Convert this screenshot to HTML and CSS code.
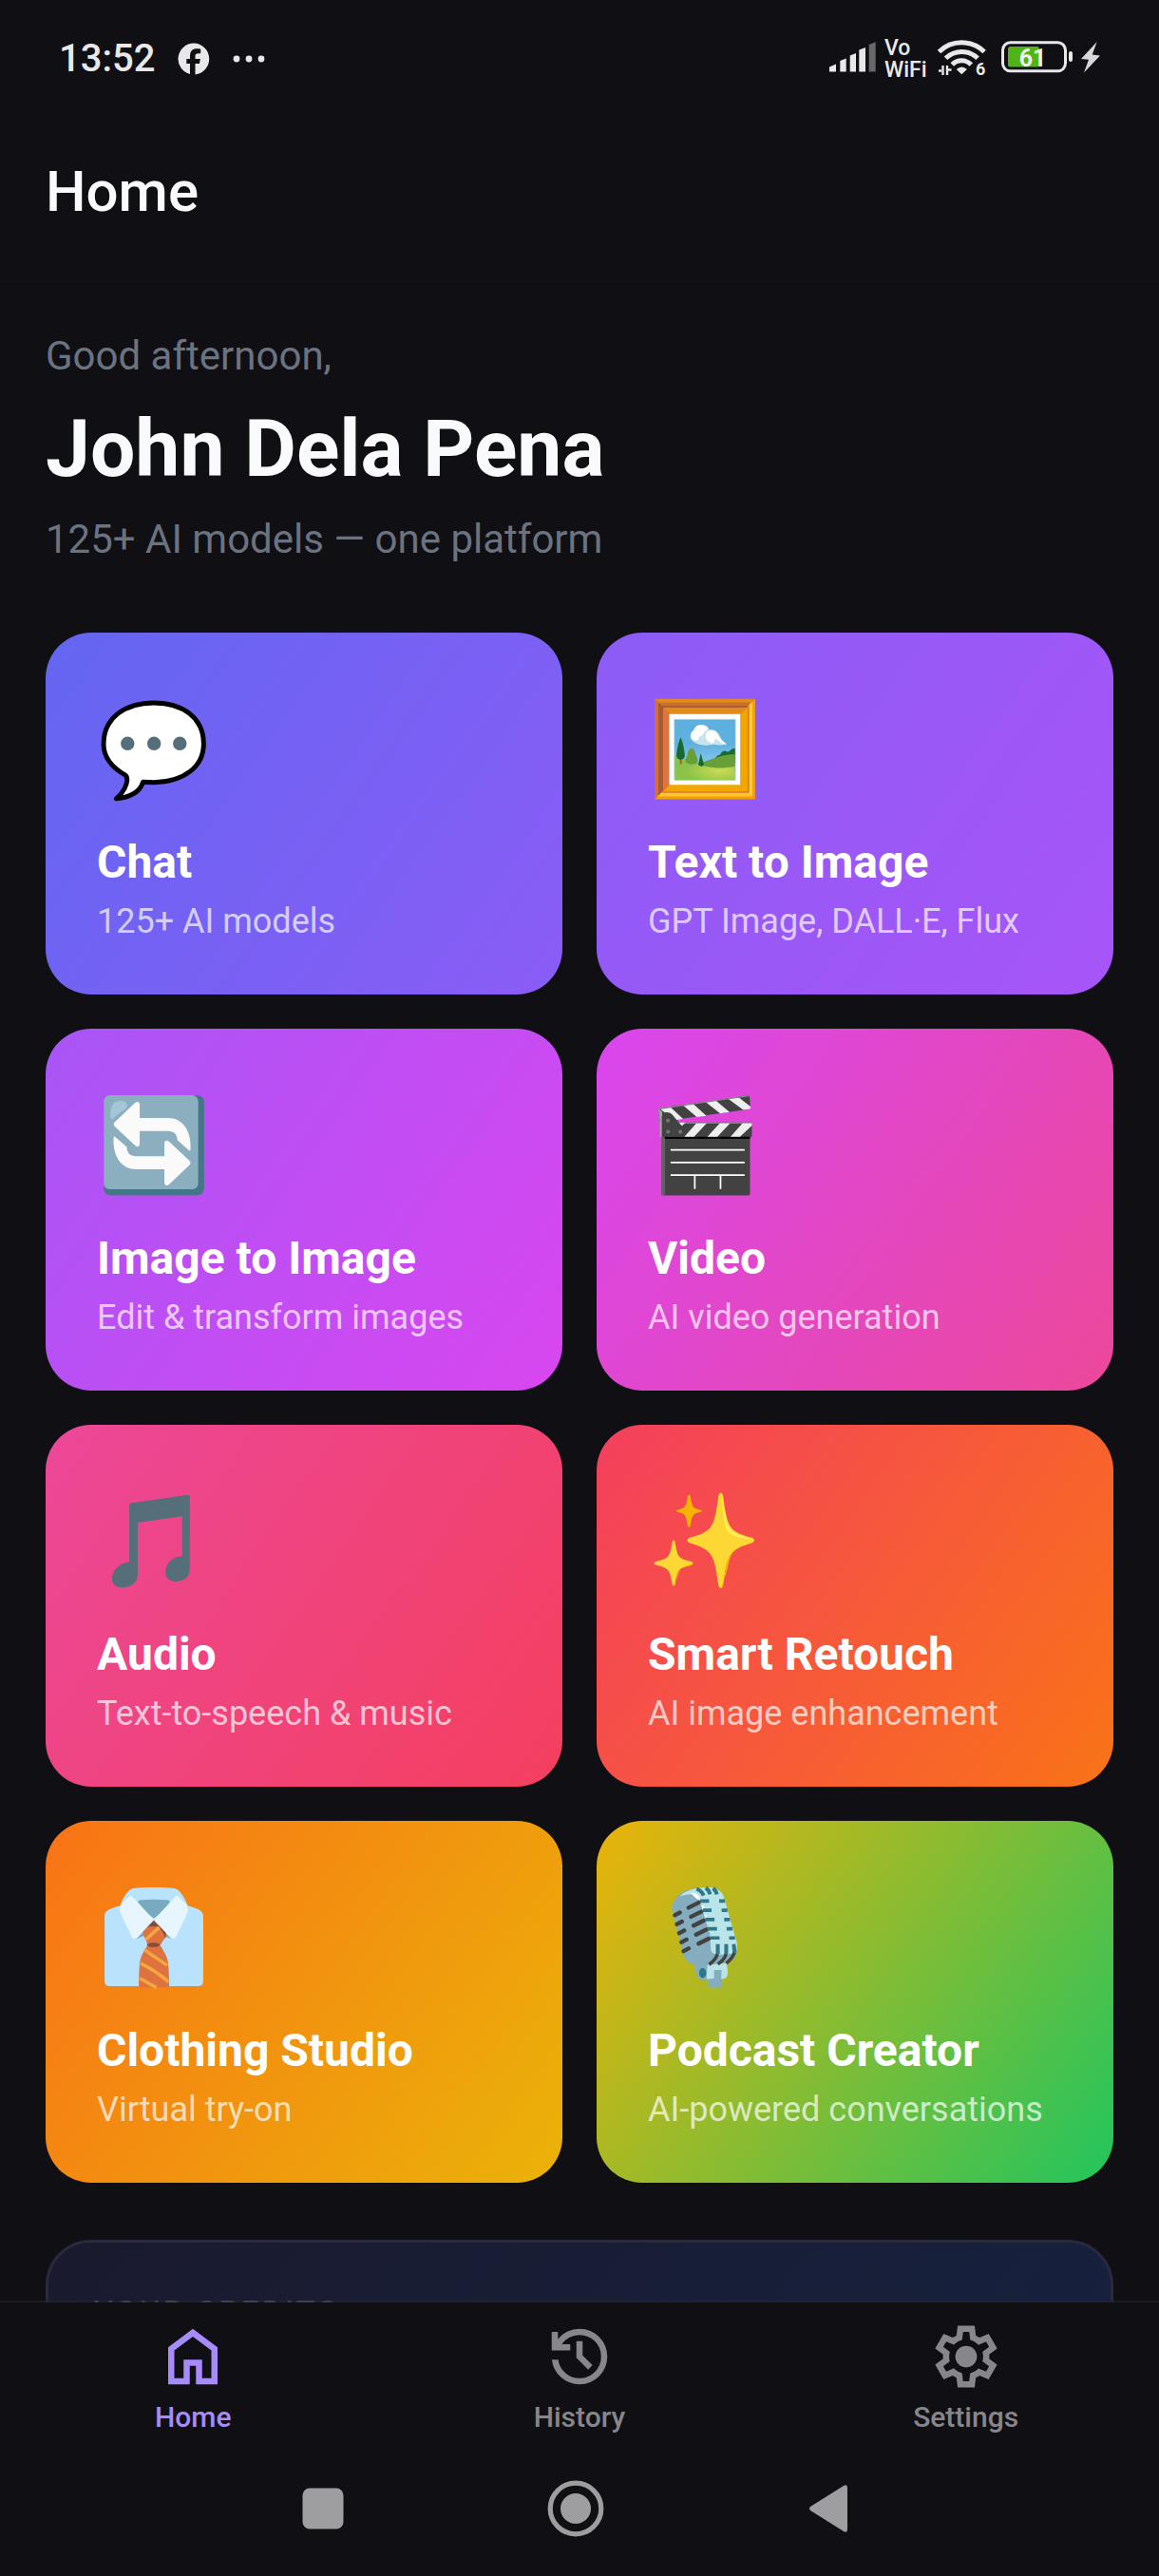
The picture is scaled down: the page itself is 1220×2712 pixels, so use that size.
FILE: index.html
```html
<!DOCTYPE html>
<html lang="en">
<head>
<meta charset="utf-8">
<meta name="viewport" content="width=device-width, initial-scale=1">
<title>Home</title>
<link rel="stylesheet" href="styles.css">
</head>
<body>
<div class="status">
  <div class="status-group status-left">
    <span class="clock">13:52</span>
    <svg width="34" height="34" viewBox="0 0 34 34" aria-hidden="true"><path fill="#e8e8e8" d="M17 .5a16.500 16.500 0 0 0-4 32.500V22H9.300v-5H13v-2.800C13 8.700 15.700 6.300 20 6.300c1.700 0 3.300.2 4.200.4v4.600h-2.400c-2.500 0-3.300 1-3.300 3.200V17h5.400l-1 5h-4.400v11.400A16.500 16.500 0 0 0 17 .5z"/></svg>
    <svg width="34" height="8" viewBox="0 0 34 8" aria-hidden="true" fill="#e8e8e8"><circle cx="4" cy="4" r="3.400"/><circle cx="17" cy="4" r="3.400"/><circle cx="30" cy="4" r="3.400"/></svg>
  </div>
  <div class="status-group status-right">
    <svg width="50" height="42" viewBox="0 0 50 42" aria-hidden="true" fill="#e8e8e8"><path d="M0 34.500V29.500l7-3v8zM11.300 34.500V23l6.400-2.500v14zM21.700 34.500V17.500l6.300-2.500v19.500zM31.300 34.500V11.500L38 9v25.500z"/><path fill="#68686b" d="M41.700 34.500V6l7-2.700v31.200z"/></svg>
    <span class="vowifi"><span>Vo</span><span>WiFi</span></span>
    <svg width="60" height="42" viewBox="0 0 60 42" aria-hidden="true" fill="none" stroke="#e8e8e8" stroke-width="5"><path d="M2.500 13.500a34 34 0 0 1 47.600 0M9.500 20.300a24 24 0 0 1 33.600 0M16.300 27a14 14 0 0 1 20 0"/><path fill="#e8e8e8" stroke="none" d="M20.700 32q5.600-5 11.200 0l-5.600 5.200z"/><path stroke-width="2.400" d="M2 33.500h3M6.500 28v10M11 38V28M11.500 32.500h4"/><text x="41" y="38" class="wifi-gen">6</text></svg>
    <svg width="76" height="42" viewBox="0 0 76 42" role="img" aria-label="Battery 61%"><rect x="1.500" y="3.800" width="66" height="30" rx="8" fill="none" stroke="#e8e8e8" stroke-width="3"/><rect x="7" y="8" width="33" height="21.500" rx="2.500" fill="#4fb516"/><rect x="71" y="13" width="4" height="11" rx="2" fill="#e8e8e8"/><text x="33" y="29" text-anchor="middle" class="battery-level">61</text></svg>
    <svg width="20" height="42" viewBox="0 0 20 42" aria-hidden="true"><path fill="#d8d8d8" d="M16.700 3 0 21l8 .7L3 35.500l17-18-8.300-1z"/></svg>
  </div>
</div>

<header class="appbar"><h1>Home</h1></header>

<main class="content">
  <section class="greeting">
    <p class="muted">Good afternoon,</p>
    <h2>John Dela Pena</h2>
    <p class="muted">125+ AI models — one platform</p>
  </section>

  <section class="grid">
    <a class="card chat" href="#chat">
      <svg class="pic" viewBox="-4 -14 136 150" aria-hidden="true"><path fill="#fff" stroke="#000" stroke-width="5.600" stroke-linejoin="round" d="M64 8.700C29 8.700 3.800 27 3.800 58c0 17 11.700 29 25.700 37 4 2.500 2.500 10-.5 16-2.500 5-6 9-10 12.300 15-1.500 28-7 32-20 4 .3 8 .5 13 .5 36-.5 59.500-19 59.500-46C123.500 27 99 8.700 64 8.700z"/><g fill="#546e7a"><circle cx="32.500" cy="57.400" r="8.200"/><circle cx="64.200" cy="57.400" r="8.200"/><circle cx="95" cy="57.400" r="8.200"/></g></svg>
      <h3>Chat</h3><p>125+ AI models</p>
    </a>
    <a class="card text-image" href="#text-to-image">
      <svg class="pic" viewBox="-4 -14 136 150" aria-hidden="true">
        <defs><linearGradient id="sky" x1="0" y1="0" x2="0" y2="1"><stop offset=".4" stop-color="#5eb0de"/><stop offset="1" stop-color="#a8dcfb"/></linearGradient><radialGradient id="field" cx=".75" cy=".6" r=".55"><stop offset="0" stop-color="#cddc55"/><stop offset="1" stop-color="#8bc34a"/></radialGradient></defs>
        <path fill="#df8a1b" d="M4 4h120L64 64z"/><path fill="#d1703a" d="M4 4v120l60-60z"/><path fill="#f2a600" d="M124 4v120L64 64z"/><path fill="#f2a000" d="M4 124h120L64 64z"/>
        <path fill="#c96f2a" d="M8.500 8.500h111L64 64z"/><path fill="#a35c38" d="M8.300 8.300v111.400L64 64z"/><path fill="#ffcf40" d="M120.500 7.500v113L64 64z"/><path fill="#ffc533" d="M7.500 120.600h113L64 64z"/>
        <path fill="#a8603a" d="M12 12h104L64 64z"/><path fill="#dd7a2a" d="M117 11v105.500L64 64zM12 116.300h105L64 64z"/>
        <path fill="#e38a1a" d="M14 14.300h101L64 64z"/><path fill="#e0733f" d="M14 14.300v100.400L64 64z"/><path fill="#f2a600" d="M115 14.300v100.400H14L64 64z"/>
        <path fill="#fff" d="M21.400 22h84.800v84.800H21.400z"/><path fill="url(#sky)" stroke="#9cc6df" stroke-width=".8" d="M27.500 28.500h73v72.500h-73z"/>
        <path fill="#1b6b2c" d="M72 80c4-2 5-9 10-9 3-6 7-5 8-4 4 1 5-4 10-4v17z"/><path fill="#689f38" d="M50 81c18 0 25-10 50-11v22H50z"/><path fill="url(#field)" d="M28 73c20 3 30 13 50 13.500 8 .3 15-.5 22-1.500v16H28z"/>
        <path fill="#c9e3ea" d="M46.500 50c0-4 2-7 4-8 2-8 15-9 19-1 7-1 11 3 13 9 2 4 5 6 8 8-6 2-11 1-16 .5-8 2-24 2-28-8.500z"/><path fill="#fff" d="M47 48c0-3 2-6 3.500-6 2-9 15-9 18-2-6 2-6 7-8 8-5 0-2 5-7 6-5-1-6-3-6.500-6zM65 49c-1-8 10-11 14-3 4 7 7 10 11 12-6 0-9-3-13-7-2 3-2 6-4 6-5-1-8-4-8-8z"/>
        <path fill="#a8603a" d="M34 72h2.500v10H34z"/><path fill="#176a2c" d="M35 50c3 7 5 17 5 23-2 5-8 5-10 0 0-6 2-16 5-23zM59 69l4 14-3 2-4-2z"/><path fill="#689f38" d="M48 63c4 0 5 7 5 8 3 4 3 8 1 10-5 2-10 1-13-1-1-3 0-6 2-8 0-4 2-9 5-9z"/>
      </svg>
      <h3>Text to Image</h3><p>GPT Image, DALL·E, Flux</p>
    </a>
    <a class="card image-image" href="#image-to-image">
      <svg class="pic" viewBox="-4 -14 136 150" aria-hidden="true"><rect x="4" y="4.300" width="120" height="119.700" rx="8" fill="#437787"/><rect x="4" y="4.300" width="113" height="112.500" rx="7" fill="#8bafbf"/><path fill="#a3c7d6" d="M12 29c0-14 4-18 14-18 6 0 8 7 4 10-7 4-11 7-15 12-2 1-3-1-3-4z"/><path fill="#fafafa" d="M17 36.500 41.500 13.300c2.500-2.300 5.500-1.200 5.500 2.200v16h34c17 0 28 15 26.800 37.500-.2 1.500-1 2-2 1L92 58c0-7-4-11-11-11H47v15.500c0 3.400-3 4.500-5.500 2L17 41.500c-1.500-1.500-1.500-3.500 0-5z"/><path fill="#fafafa" transform="rotate(180 61.800 62.100)" d="M17 36.500 41.500 13.300c2.500-2.300 5.500-1.200 5.500 2.200v16h34c17 0 28 15 26.800 37.500-.2 1.500-1 2-2 1L92 58c0-7-4-11-11-11H47v15.500c0 3.400-3 4.500-5.500 2L17 41.500c-1.500-1.500-1.500-3.500 0-5z"/></svg>
      <h3>Image to Image</h3><p>Edit &amp; transform images</p>
    </a>
    <a class="card video" href="#video">
      <svg class="pic" viewBox="-4 -14 136 150" aria-hidden="true">
        <path fill="#424242" d="M8 20.200 117.300 4.300l1.200 16.300L10.300 36z"/><path fill="#eee" d="M9.500 20l13-1.900 15.400 14.500-9.500 1.300zM37.400 15.900l12-1.700 16.400 14.600-11.500 1.600zM64.600 12l12-1.800 16.800 14.200-11.100 1.600zM91.400 8.100l12.300-1.800 14.800 11.500v2.800l-8.600 1.300z"/><path fill="none" stroke="#858585" stroke-width="1.400" d="M8 20.700 117.300 4.800"/>
        <rect x="12.300" y="50" width="105.700" height="74" rx="2" fill="#424242"/><path fill="#616161" d="M12.300 54h4v70h-2q-2 0-2-2z"/><path d="M16 53h102v3.500H16z"/>
        <path fill="#424242" d="M12 36.800h108.200V54H12z"/><path fill="#eee" d="M54.300 37h12.400L51 54H39.500zM82.300 37h12.400L79 54H67zM109.500 37h10.700v3.500L106 54H94.700zM28 36.800h13l-6 5.500z"/><path stroke="#9a9a9a" stroke-width="1.200" d="M40 37.400h80"/>
        <path fill="#9aa69c" d="M8 20.200l5 4v30h-3V34z"/><path fill="#424242" d="M12.500 54V30c0-6 8-7 12-3L39 44v10z"/><g fill="#757575"><circle cx="19.800" cy="34.500" r="2.300"/><circle cx="19.800" cy="48" r="2.300"/><circle cx="34.600" cy="48" r="2.300"/></g>
        <path fill="none" stroke="#fff" stroke-width="2" d="M23 69.600h88.500M23 84.700h88.500M23 99.800h88.500M51.900 100v16.400M82.700 100v16.400"/>
      </svg>
      <h3>Video</h3><p>AI video generation</p>
    </a>
    <a class="card audio" href="#audio">
      <svg class="pic" viewBox="-4 -14 136 150" aria-hidden="true"><path fill="#546e7a" d="M34.600 20.500q0-1.500 1.400-2l69-10q1.900-.2 1.900 1.500V97c0 11-9 15-17 15-7 0-12-4-12-11 0-12 11-20 20-18.500V34l-53.300 7.700V104c0 10-9 15.400-18.300 15.400-8 0-12.400-4-12.400-10.400 0-11 10-20 20.700-20z"/></svg>
      <h3>Audio</h3><p>Text-to-speech &amp; music</p>
    </a>
    <a class="card retouch" href="#smart-retouch">
      <svg class="pic" viewBox="-4 -14 136 150" aria-hidden="true"><path fill="#f4b400" d="M45 8.500c1.500 0 1.500 1 2 4 2 11 3 12 12 14 2 .5 2 2 0 2.500-9 2-10 3-12 14-.5 3-.5 4-2 4s-1.500-1-2-4c-2-11-3-12-12-14-2-.5-2-2 0-2.500 9-2 10-3 12-14 .5-3 .5-4 2-4z"/><path fill="#fdd835" d="M83 6.200c2 0 2.500 2 3 5 5 38 8 41 34 48.500 4 1.500 4 5 0 6.500-26 8-29 12-34 49-.5 3-1 5-3 5s-2.500-2-3-5c-5-37-8-41-34-49-4-1.500-4-5 0-6.500 26-7.500 29-10.500 34-48.500.5-3 1-5 3-5z"/><path fill="#ffee58" d="M84 8c2 20 2 40 9 46 7 5 17 7 27 8-2-2-15-4-23-10-7-6-9-20-13-44z"/><path fill="#f4b400" d="M122 64c-3 3-19 6-25 14-5 7-5 23-14 42 3 0 3-7 4-12 5-32 9-35 33-42 2-.6 3-1.400 2-2z"/><path fill="#fdd835" d="M26.600 62.800c1.300 0 1.500 1.500 2 4 3 17 4 18 19 21.500 3 1 3 3 0 4-15 4-16 5-19 21-.5 3-.7 4-2 4s-1.500-1-2-4c-3-16-4-17-19-21-3-1-3-3 0-4 15-3.500 16-4.500 19-21.500.5-2.500.7-4 2-4z"/><path fill="#f4b400" d="M49 91c-6 2-12 3-15 8-2 4-3 11-7 18 2 0 2-4 3-8 2-12 5-13 17-16 2-.6 2.500-1.400 2-2z"/></svg>
      <h3>Smart Retouch</h3><p>AI image enhancement</p>
    </a>
    <a class="card clothing" href="#clothing-studio">
      <svg class="pic" viewBox="-4 -14 136 150" aria-hidden="true">
        <path fill="#b9e2fc" d="M5 39c0-7 5-9 18.500-13C28 14 34 6 40 5.300c12-1.400 36-1.400 48 0 6 .7 12 8.700 16.500 20.700C118 30 123 32 123 39v77q0 6.500-6 6.500H11q-6 0-6-6.500z"/>
        <path fill="#78abc0" d="M45 22c0-2 1-2.500 4-2.700 10-.8 20-.8 30 0 3 .2 4 .7 4 2.700-4 8-12 14-19 19-7-5-15-11-19-19zM43 65.500l9-9 0 6zM85 65.500l-9-9 0 6z"/>
        <path fill="#8a4a38" d="M64 43.500 50.500 57l7 5h15l6.500 2z"/><path fill="#de7340" d="M50.600 58q3-6 8-7h10c6 3 9 7 10 10.500-1 4-5 7-6.500 11.500H56.400c-1-5-5-10-5.800-15z"/>
        <path fill="#8a4a38" d="M66 46l12.500 12-1 8c0-6-5-12-9-15z"/>
        <path fill="#de7340" d="M56 74h16c4 7 8 13 9 20 .7 8 1.300 19 1.300 28q0 2-2 2H48q-2 0-2-2c0-9 .3-19 1-28 1-7 5-14 9-20z"/>
        <path fill="none" stroke="#f5a73f" stroke-width="4" d="M54.500 66.500 70.500 52M53 79q14 10 27 18.500M48 95q18 9 34 22.500M47 113l20 11"/><ellipse cx="63.500" cy="73" rx="7.800" ry="2.600" fill="#8a4a38"/>
        <path fill="#e6f5fe" d="M37 13.800 64 43 45 63.500q-2 2-4.500 2-2.500 0-3.500-3L23.500 34q-1-6 2-10l8-8q2-2.500 3.500-2.200zM91 13.800 64 43l19 20.500q2 2 4.500 2 2.500 0 3.500-3L104.500 34q1-6-2-10l-8-8q-2-2.500-3.500-2.200z"/>
      </svg>
      <h3>Clothing Studio</h3><p>Virtual try-on</p>
    </a>
    <a class="card podcast" href="#podcast-creator">
      <svg class="pic" viewBox="-4 -14 136 150" aria-hidden="true">
        <path fill="#84aec0" d="M50 94h20l-2 21h-8q-4 0-6-7zM24.700 30C25 18 34 11 42 8c10-4 26-5 36-2 5 2 8 7 9 11l15.500 54.500c1 10-1 17-6 20-8 4-16 4.500-28 5.300-8 .6-16 0-19-1-7-2-10-7-11.600-13z"/>
        <path fill="#b9e4ea" d="M34 15c6-7 18-10 28-10.500 7-.4 13-.4 17 2 4 2 7 6 8 10.300l15.500 54.700c.5 6-1 10-4 11.500-7 2-15 2-22 1-4-1-5.500-3-5.500-7l-1-17-12.500-41C56 11 46 11 34 15zM67 97l23-2 1.400 10.500q0 8-7 8.300H66z"/>
        <path fill="#fff" d="M47 11c6-1 10 3 11 7-2 2-4 0-11-7zM60 25l3 2 1 5-3 0zM63 36l3 2-1 3z"/>
        <path fill="none" stroke="#424242" stroke-width="5" stroke-linecap="round" d="M44.500 28.500l12-6M47.500 39.300l12-6M50.500 50l12-6M53.500 60.800l12-6M56.500 71.500l12-6M28 37.500l6-3.200M30.500 48.300l6-3.200M33.200 59l6-3.200M36 69.800l6-3.200M38.500 80.500l6-3.200"/>
        <path fill="none" stroke="#2f7889" stroke-width="4.200" d="M58.400 20.600H69M61.500 31.600H72M64.500 42.600h11M67.500 53.700h11M70.500 64.700h11M81 20.600h7M84 31.600h7M87 42.600h7M90 53.700h7M93 64.700h7"/>
        <path fill="none" stroke="#2f7889" stroke-width="4.600" d="M54 6q6 2 8.500 8M65 4.500q4 3 5 8M74 5q3 3 4.500 7.500M79.400 72v12M89.500 72v12M98.500 72l1 10"/>
        <path fill="none" stroke="#424242" stroke-width="4" d="M79 84q-2 7-10 12.500M89.500 84q-3 8-10 12M99.500 82q-3 8-10 13"/>
        <ellipse cx="61.300" cy="106.600" rx="4.200" ry="6" fill="#2f7889"/><path fill="#84aec0" d="M75 103h9l-.5 10 1.700 11H69l-2-9 8-2z"/>
      </svg>
      <h3>Podcast Creator</h3><p>AI-powered conversations</p>
    </a>
  </section>

  <section class="credits"><h4>YOUR CREDITS</h4></section>
</main>

<nav class="tabs">
  <a class="tab active" href="#home"><svg width="78" height="78" viewBox="0 -960 960 960" aria-hidden="true"><path d="M240-200h120v-240h240v240h120v-360L480-740 240-560v360Zm-80 80v-480l320-240 320 240v480H520v-240h-80v240H160Z"/></svg><span>Home</span></a>
  <a class="tab" href="#history"><svg width="78" height="78" viewBox="0 -960 960 960" aria-hidden="true"><path d="M480-120q-138 0-240.500-91.500T122-440h82q14 104 92.500 172T480-200q117 0 198.500-81.500T760-480q0-117-81.500-198.500T480-760q-69 0-129 32t-101 88h110v80H120v-240h80v94q51-64 124.500-99T480-840q75 0 140.500 28.500t114 77q48.500 48.500 77 114T840-480q0 75-28.500 140.500t-77 114q-48.500 48.500-114 77T480-120Zm112-192L440-464v-216h80v184l128 128-56 56Z"/></svg><span>History</span></a>
  <a class="tab" href="#settings"><svg width="78" height="78" viewBox="0 -960 960 960" aria-hidden="true"><path d="m370-80-16-128q-13-5-24.500-12T307-235l-119 50L78-375l103-78q-1-7-1-13.500v-27q0-6.500 1-13.500L78-585l110-190 119 50q11-8 23-15t24-12l16-128h220l16 128q13 5 24.500 12t22.500 15l119-50 110 190-103 78q1 7 1 13.500v27q0 6.500-2 13.500l103 78-110 190-118-50q-11 8-23 15t-24 12L590-80H370Zm70-80h79l14-106q31-8 57.500-23.500T639-327l99 41 39-68-86-65q5-14 7-29.500t2-31.500q0-16-2-31.500t-7-29.500l86-65-39-68-99 42q-22-23-48.500-38.500T533-694l-13-106h-79l-14 106q-31 8-57.500 23.500T321-633l-99-41-39 68 86 64q-5 15-7 30t-2 32q0 16 2 31t7 30l-86 65 39 68 99-42q22 23 48.500 38.500T427-266l13 106Z"/><circle cx="480" cy="-480" r="140"/></svg><span>Settings</span></a>
</nav>

<div class="system-nav">
  <button type="button" aria-label="Recent apps"><svg width="60" height="60" viewBox="0 0 60 60"><rect x="8.500" y="8.500" width="43" height="43" rx="7.500"/></svg></button>
  <button type="button" aria-label="Home screen"><svg width="60" height="60" viewBox="0 0 60 60"><circle cx="30" cy="30" r="26.800" fill="none" stroke="#9e9ea0" stroke-width="5.200"/><circle cx="30" cy="30" r="16"/></svg></button>
  <button type="button" aria-label="Back"><svg width="60" height="60" viewBox="0 0 60 60"><path d="M11 28 46 6q4-2 4 2v44q0 4-4 2L11 32q-2-2 0-4z"/></svg></button>
</div>
</body>
</html>
```
FILE: styles.css
```css
* {
  box-sizing: border-box;
}

body {
  margin: 0;
  height: 100vh;
  display: flex;
  flex-direction: column;
  background: #0f0f14;
  color: #f9fafb;
  font-family: Roboto, "Liberation Sans", sans-serif;
}

h1, h2, h3, h4, p {
  margin: 0;
}

a {
  color: inherit;
  text-decoration: none;
}

svg {
  display: block;
  flex: none;
}

/* Status bar */
.status {
  display: flex;
  justify-content: space-between;
  align-items: center;
  padding: 38px 62px;
  color: #e8e8e8;
}

.status-group {
  display: flex;
  align-items: center;
}

.status-left {
  gap: 24px;
}

.status-right {
  gap: 8px;
}

.clock {
  font-size: 40px;
  line-height: 48px;
  font-weight: 500;
}

.vowifi {
  display: flex;
  flex-direction: column;
  width: 47px;
  font-size: 23px;
  line-height: 23px;
  font-weight: 500;
}

.wifi-gen {
  font-size: 18px;
  font-weight: 700;
  fill: #e8e8e8;
  stroke: none;
}

.battery-level {
  font-size: 25px;
  font-weight: 700;
  fill: #f0f0f0;
}

/* App bar */
.appbar {
  padding: 43px 48px 59px;
  border-bottom: 1px solid #121217;
}

.appbar h1 {
  font-size: 60px;
  line-height: 70px;
  font-weight: 500;
}

/* Scrolling content, running under the tab bar's translucent top line */
.content {
  flex: 1;
  min-height: 0;
  overflow: hidden;
  margin-bottom: -2px;
  padding: 53px 48px 0;
}

.greeting {
  margin-bottom: 73px;
}

.greeting .muted {
  font-size: 42px;
  line-height: 50px;
  color: #6b7280;
}

.greeting h2 {
  margin: 23px 0 20px;
  font-size: 84px;
  line-height: 100px;
  font-weight: 700;
}

.grid {
  display: grid;
  grid-template-columns: 1fr 1fr;
  gap: 36px;
}

.card {
  display: flex;
  flex-direction: column;
  padding: 54px;
  border-radius: 48px;
  background: linear-gradient(125deg, var(--from), var(--to));
  color: #fff;
}

.chat { --from: #6366f1; --to: #8b5cf6; }
.text-image { --from: #8b5cf6; --to: #a855f7; }
.image-image { --from: #a855f7; --to: #d946ef; }
.video { --from: #d946ef; --to: #ec4899; }
.audio { --from: #ec4899; --to: #f43f5e; }
.retouch { --from: #f43f5e; --to: #f97316; }
.clothing { --from: #f97316; --to: #eab308; }
.podcast { --from: #eab308; --to: #22c55e; }

.pic {
  width: 120px;
  height: 132px;
  margin-bottom: 27px;
}

.card h3 {
  margin-bottom: 12px;
  font-size: 48px;
  line-height: 57px;
  font-weight: 700;
}

.card p {
  font-size: 36px;
  line-height: 45px;
  color: rgba(255, 255, 255, 0.7);
}

.credits {
  margin-top: 60px;
  padding: 54px 48px;
  border: 3px solid #2a2a3e;
  border-radius: 48px;
  background: linear-gradient(125deg, #1a1a2e, #16213e);
}

.credits h4 {
  font-size: 33px;
  line-height: 39px;
  font-weight: 400;
  letter-spacing: 3px;
  color: #6b7280;
}

/* Tab bar */
.tabs {
  position: relative;
  display: grid;
  grid-template-columns: repeat(3, 1fr);
  padding-top: 18px;
  border-top: 2px solid rgba(36, 36, 54, 0.6);
  background: #0f0f14 padding-box;
}

.tab {
  display: flex;
  flex-direction: column;
  align-items: center;
  gap: 7px;
  color: #87878b;
  fill: currentColor;
  font-size: 30px;
  line-height: 36px;
  font-weight: 500;
}

.tab.active {
  color: #a78bfa;
}

/* System navigation */
.system-nav {
  display: flex;
  justify-content: center;
  gap: 206px;
  padding: 48px 8px 41px 0;
}

.system-nav button {
  padding: 0;
  border: 0;
  background: none;
  fill: #9e9ea0;
}
```
